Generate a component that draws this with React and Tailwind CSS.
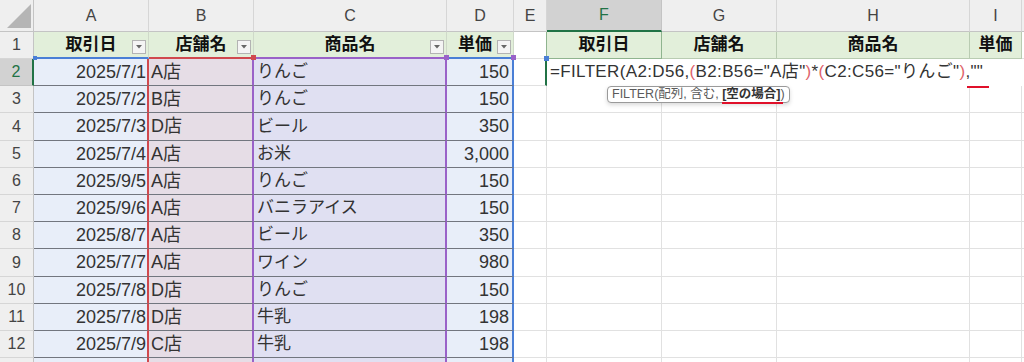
import React from "react";

const F = "font-[family-name:'Liberation_Sans','Noto_Sans_CJK_JP',sans-serif]";

const rows = [
  { n: "2", h: "h-[27px]", a: "2025/7/1", b: "A店", c: "りんご", d: "150" },
  { n: "3", h: "h-[27px]", a: "2025/7/2", b: "B店", c: "りんご", d: "150" },
  { n: "4", h: "h-[28px]", a: "2025/7/3", b: "D店", c: "ビール", d: "350" },
  { n: "5", h: "h-[27px]", a: "2025/7/4", b: "A店", c: "お米", d: "3,000" },
  { n: "6", h: "h-[27px]", a: "2025/9/5", b: "A店", c: "りんご", d: "150" },
  { n: "7", h: "h-[27px]", a: "2025/9/6", b: "A店", c: "バニラアイス", d: "150" },
  { n: "8", h: "h-[27px]", a: "2025/8/7", b: "A店", c: "ビール", d: "350" },
  { n: "9", h: "h-[28px]", a: "2025/7/7", b: "A店", c: "ワイン", d: "980" },
  { n: "10", h: "h-[27px]", a: "2025/7/8", b: "D店", c: "りんご", d: "150" },
  { n: "11", h: "h-[27px]", a: "2025/7/8", b: "D店", c: "牛乳", d: "198" },
  { n: "12", h: "h-[27px]", a: "2025/7/9", b: "C店", c: "牛乳", d: "198" },
  { n: "", h: "h-[27px]", a: "", b: "", c: "", d: "" },
];

function FilterBtn() {
  return (
    <div className="absolute right-[2px] bottom-[3px] w-[14px] h-[14px] border border-[#b3b3b3] bg-[#f4f4f4] flex items-center justify-center">
      <svg width="6" height="4" viewBox="0 0 6 4">
        <path d="M0 0 L6 0 L3 3.5 Z" fill="#666" />
      </svg>
    </div>
  );
}

function Handle({ color }) {
  return <div className={`absolute right-[-3px] bottom-[-3px] w-[5px] h-[5px] z-10 ${color}`} />;
}

export default function App() {
  return (
    <div className={`w-[1024px] h-[362px] overflow-hidden bg-white ${F} relative`}>
      {/* column headers */}
      <div className="flex h-[32px] text-[16px] text-[#444]">
        <div className="w-[34px] shrink-0 bg-[#efefef] border-r border-b border-[#c4c4c4] flex items-end justify-end pr-[2px] pb-[3px]">
          <svg width="24" height="24" viewBox="0 0 24 24">
            <path d="M24 0 L24 24 L0 24 Z" fill="#b5b5b5" />
          </svg>
        </div>
        <div className="w-[115px] shrink-0 bg-[#efefef] border-r border-r-[#d6d6d6] border-b border-b-[#c4c4c4] flex items-center justify-center">A</div>
        <div className="w-[105px] shrink-0 bg-[#efefef] border-r border-r-[#d6d6d6] border-b border-b-[#c4c4c4] flex items-center justify-center">B</div>
        <div className="w-[193px] shrink-0 bg-[#efefef] border-r border-r-[#d6d6d6] border-b border-b-[#c4c4c4] flex items-center justify-center">C</div>
        <div className="w-[67px] shrink-0 bg-[#efefef] border-r border-r-[#d6d6d6] border-b border-b-[#c4c4c4] flex items-center justify-center">D</div>
        <div className="w-[33px] shrink-0 bg-[#efefef] border-r border-r-[#d6d6d6] border-b border-b-[#c4c4c4] flex items-center justify-center">E</div>
        <div className="w-[115px] shrink-0 bg-[#d2d2d2] border-r border-r-[#c4c4c4] border-b-2 border-b-[#217346] flex items-center justify-center text-[#217346]">F</div>
        <div className="w-[115px] shrink-0 bg-[#efefef] border-r border-r-[#d6d6d6] border-b border-b-[#c4c4c4] flex items-center justify-center">G</div>
        <div className="w-[193px] shrink-0 bg-[#efefef] border-r border-r-[#d6d6d6] border-b border-b-[#c4c4c4] flex items-center justify-center">H</div>
        <div className="w-[52px] shrink-0 bg-[#efefef] border-r border-r-[#d6d6d6] border-b border-b-[#c4c4c4] flex items-center justify-center">I</div>
        <div className="flex-1 bg-[#efefef] border-b border-b-[#c4c4c4]" />
      </div>

      {/* row 1 */}
      <div className="flex h-[27px] text-[17px] font-bold text-[#111]">
        <div className="w-[34px] shrink-0 bg-[#efefef] border-r border-r-[#c4c4c4] border-b border-b-[#d6d6d6] flex items-center justify-center text-[16px] font-normal text-[#444]">1</div>
        <div className="relative w-[115px] shrink-0 bg-[#e2efda] border-r border-r-[#cfd9c9] border-b-2 border-b-[#4a7fd6] flex items-center justify-center">
          取引日<FilterBtn />
          <div className="absolute left-[-1px] bottom-[-3px] w-[4px] h-[4px] z-10 bg-[#4a7fd6]" />
        </div>
        <div className="relative w-[105px] shrink-0 bg-[#e2efda] border-r border-r-[#cfd9c9] border-b-2 border-b-[#d0494e] flex items-center justify-center">店舗名<FilterBtn /><Handle color="bg-[#d0494e]" /></div>
        <div className="relative w-[193px] shrink-0 bg-[#e2efda] border-r border-r-[#cfd9c9] border-b-2 border-b-[#9a62c8] flex items-center justify-center">商品名<FilterBtn /><Handle color="bg-[#9a62c8]" /></div>
        <div className="relative w-[67px] shrink-0 bg-[#e2efda] border-r border-r-[#cfd9c9] border-b-2 border-b-[#4a7fd6] flex items-center justify-center pr-[10px]">単価<FilterBtn /><Handle color="bg-[#9a62c8]" /></div>
        <div className="relative w-[33px] shrink-0 bg-white border-r border-r-[#8fb48f] border-b border-b-[#e1e1e1]"><Handle color="bg-[#4a7fd6]" /></div>
        <div className="w-[115px] shrink-0 bg-[#e2efda] border-r border-r-[#8fb48f] border-b border-b-[#8fb48f] flex items-center justify-center">取引日</div>
        <div className="w-[115px] shrink-0 bg-[#e2efda] border-r border-r-[#b9ccb2] border-b border-b-[#b9ccb2] flex items-center justify-center">店舗名</div>
        <div className="w-[193px] shrink-0 bg-[#e2efda] border-r border-r-[#b9ccb2] border-b border-b-[#b9ccb2] flex items-center justify-center">商品名</div>
        <div className="w-[52px] shrink-0 bg-[#e2efda] border-r border-r-[#b9ccb2] border-b border-b-[#b9ccb2] flex items-center justify-center">単価</div>
        <div className="flex-1 border-b border-b-[#e1e1e1]" />
      </div>

      {/* data rows */}
      {rows.map((r, i) => {
        const active = i === 0;
        return (
          <div key={i} className={`flex ${r.h} text-[18px] text-[#333]`}>
            <div
              className={
                active
                  ? "w-[34px] shrink-0 bg-[#d2d2d2] border-r-2 border-r-[#217346] border-b border-b-[#c4c4c4] flex items-center justify-center text-[16px] text-[#217346]"
                  : "w-[34px] shrink-0 bg-[#efefef] border-r border-r-[#c4c4c4] border-b border-b-[#d6d6d6] flex items-center justify-center text-[16px] text-[#444]"
              }
            >
              {r.n}
            </div>
            <div className="w-[115px] shrink-0 bg-[#e8eef9] border-b border-b-[#72767f] border-r-2 border-r-[#d0494e] flex items-center justify-end pr-[1px]">{r.a}</div>
            <div className="w-[105px] shrink-0 bg-[#e6dde6] border-b border-b-[#72767f] border-r-2 border-r-[#9a62c8] flex items-center pl-[2px]">{r.b}</div>
            <div className="w-[193px] shrink-0 bg-[#e0e0f2] border-b border-b-[#72767f] border-r-2 border-r-[#9a62c8] flex items-center pl-[3px] text-[17px]">{r.c}</div>
            <div className="w-[67px] shrink-0 bg-[#e8eef9] border-b border-b-[#72767f] border-r-2 border-r-[#4a7fd6] flex items-center justify-end pr-[3px]">{r.d}</div>
            {active ? (
              <>
                <div className="w-[33px] shrink-0 bg-white border-r-2 border-r-[#217346] border-b border-b-[#e1e1e1]" />
                <div className="relative flex-1 bg-white pl-[3px] whitespace-nowrap text-[17px] leading-[26px] text-[#333] tracking-[0.35px]">
                  <span>=FILTER(A2:D56,</span>
                  <span className="text-[#e0626b]">(</span>
                  <span>B2:B56="A店"</span>
                  <span className="text-[#e0626b]">)</span>
                  <span>*</span>
                  <span className="text-[#e0626b]">(</span>
                  <span>C2:C56="りんご"</span>
                  <span className="text-[#e0626b]">)</span>
                  <span className="relative">
                    ,""
                    <span className="absolute left-[2px] right-[-6px] top-[24px] h-[2px] bg-[#e0102a]" />
                  </span>
                  <div className="absolute z-20 left-[60px] top-[27px] h-[17px] px-[4px] bg-white border border-[#9a9a9a] rounded-[4px] shadow-[0_2px_4px_rgba(0,0,0,0.15)] text-[12.5px] leading-[15px] text-[#5a5a5a] tracking-[0px]">
                    FILTER(配列, 含む,{" "}
                    <span className="relative font-bold text-[#333]">
                      [空の場合]
                      <span className="absolute left-0 right-[-2px] bottom-[-3px] h-[2px] bg-[#e0102a]" />
                    </span>
                    )
                  </div>
                </div>
              </>
            ) : (
              <>
                <div className="w-[33px] shrink-0 bg-white border-r border-r-[#e1e1e1] border-b border-b-[#e1e1e1]" />
                <div className="w-[115px] shrink-0 bg-white border-r border-r-[#e1e1e1] border-b border-b-[#e1e1e1]" />
                <div className="w-[115px] shrink-0 bg-white border-r border-r-[#e1e1e1] border-b border-b-[#e1e1e1]" />
                <div className="w-[193px] shrink-0 bg-white border-r border-r-[#e1e1e1] border-b border-b-[#e1e1e1]" />
                <div className="w-[52px] shrink-0 bg-white border-r border-r-[#e1e1e1] border-b border-b-[#e1e1e1]" />
                <div className="flex-1 bg-white border-b border-b-[#e1e1e1]" />
              </>
            )}
          </div>
        );
      })}
    </div>
  );
}
